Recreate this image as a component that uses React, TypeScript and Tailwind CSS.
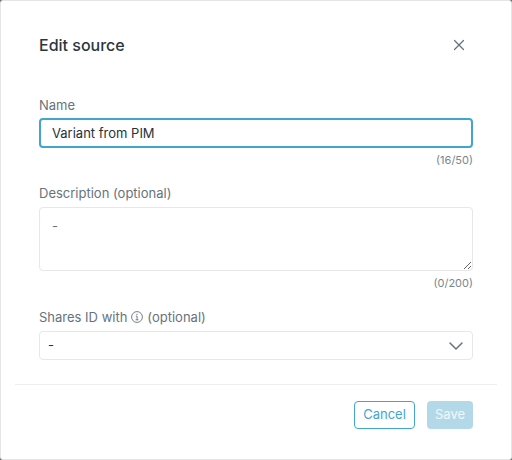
import { ChevronDown, X } from "lucide-react";

const font = { fontFamily: "Inter, sans-serif" };

function Counter({ children }: { children: string }) {
  return <div className="mt-[5px] text-right text-[11px] leading-[14px] text-[#7b858c]">{children}</div>;
}

function InfoIcon() {
  return (
    <svg width="12" height="12" viewBox="0 0 12 12" fill="none" stroke="currentColor" strokeWidth="0.9" className="mx-[4px] shrink-0">
      <circle cx="6" cy="6" r="5.4" />
      <path d="M4.9 5.2H6.1V8.8M4.6 8.8H7.5" />
      <circle cx="6" cy="3.4" r="0.6" fill="currentColor" stroke="none" />
    </svg>
  );
}

export default function App() {
  return (
    <div className="h-[460px] w-[512px] overflow-hidden bg-[#6b7075]" style={font}>
      <div className="h-[460px] w-[512px] rounded-[3px] border border-[#e3e5e6] bg-white">
        {/* Header */}
        <div className="flex h-[94px] items-start justify-between pl-[38px] pr-[43px] pt-[33px]">
          <h2 className="text-base font-medium leading-[22px] text-[#2b373f]">Edit source</h2>
          <button className="mt-[2px] text-[#66737c]">
            <X size={18} strokeWidth={1.6} />
          </button>
        </div>

        {/* Form */}
        <div className="flex flex-col px-[38px]">
          <label className="text-[13px] leading-[20px] text-[#66737c]">Name</label>
          <input
            readOnly
            value="Variant from PIM"
            className="mt-[3px] h-[30px] w-full rounded-[4px] border-2 border-[#41a5cf] px-[11px] text-[13px] text-[#26323a] outline-none"
          />
          <Counter>(16/50)</Counter>

          <label className="mt-[16px] text-[13px] leading-[20px] text-[#66737c]">
            Description <span>(optional)</span>
          </label>
          <textarea
            readOnly
            value="-"
            className="mt-[4px] h-[64px] w-full rounded-[4px] border border-[#e5e7e8] px-3 py-[8px] text-[13px] leading-[20px] text-[#66737c] outline-none"
          />
          <Counter>(0/200)</Counter>

          <label className="mt-[17px] flex items-center text-[13px] leading-[20px] text-[#66737c]">
            Shares ID with
            <InfoIcon />
            (optional)
          </label>
          <div className="mt-[4px] flex h-[29px] items-center justify-between rounded-[4px] border border-[#e5e7e8] pl-[8px] pr-[4px] text-[13px] text-[#26323a]">
            <span>-</span>
            <ChevronDown size={24} strokeWidth={1.5} className="text-[#66737c]" />
          </div>
        </div>

        {/* Footer */}
        <div className="mx-[14px] mt-[24px] border-t border-[#eceeef]" />
        <div className="flex justify-end gap-3 px-[38px] pt-[16px]">
          <button className="h-[28px] w-[61px] rounded-[4px] border border-[#41a5cf] text-[13px] text-[#41a5cf]">Cancel</button>
          <button className="h-[28px] w-[46px] rounded-[4px] bg-[#b3d9e9] text-[13px] text-white/80">Save</button>
        </div>
      </div>
    </div>
  );
}
